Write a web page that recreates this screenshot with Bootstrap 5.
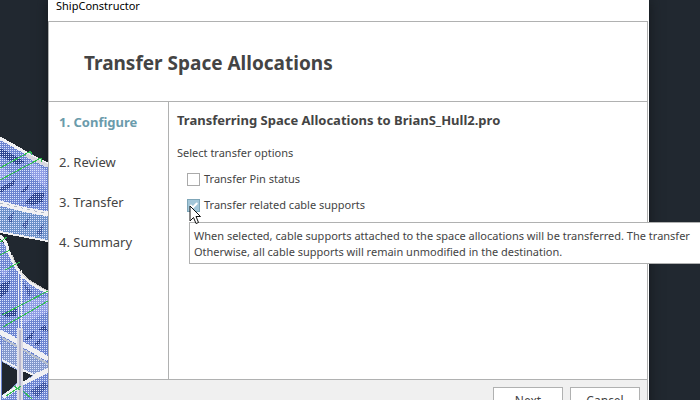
<!DOCTYPE html>
<html lang="en">
<head>
<meta charset="utf-8">
<meta name="viewport" content="width=device-width, initial-scale=1">
<title>ShipConstructor</title>
<link rel="stylesheet" href="https://cdn.jsdelivr.net/npm/bootstrap@5.3.0/dist/css/bootstrap.min.css">
<style>
  :root { --line: #b0b1b1; --ink: #444; }
  body { background: #212830; color: var(--ink); font: 12px/16px "Noto Sans", "Open Sans", sans-serif; }
  .hull { left: 0; bottom: 0; width: 48px; height: 270px; }
  .wizard { margin: 0 51px 0 48px; height: calc(100vh + 23px); box-shadow: 0 0 12px #14181c; }
  .title-strip { height: 21px; padding: 0 8px; color: #000; font-size: 11px; line-height: 12px; }
  .frame { border: 1px solid var(--line); margin-right: 1px; }
  .heading { padding: 28px 35px 24px; border-bottom: 1px solid var(--line); }
  .heading h1 { font-size: 19px; line-height: 27px; font-weight: 700; }
  .steps { width: 120px; padding: 10px; gap: 20px; border-right: 1px solid var(--line); font-size: 13px; line-height: 20px; }
  .steps a { color: var(--ink); }
  .steps a.current { color: #6b9bab; font-weight: 700; }
  .options { padding: 8px; }
  .options h2 { font-size: 13px; line-height: 20px; font-weight: 700; margin-bottom: 15px; }
  .options p { font-size: 11px; margin-bottom: 10px; }
  .option { padding-left: 10px; gap: 4px; margin-bottom: 10px; font-size: 11px; }
  .option .form-check-input { width: 13px; height: 13px; border: 1px solid #aaa; border-radius: 0; box-shadow: none; }
  .option .form-check-input:checked { background-color: #a3c6d8; border-color: #7fa6b8; background-size: 13px; }
  .hint { left: 189px; right: -2px; top: 222px; padding: 5px 4px 3px; border: 1px solid var(--line); font-size: 11px; }
  .pointer { left: 189px; top: 205px; width: 13px; height: 20px; }
  .actions { padding: 7px; gap: 7px; background: #f0f0f0; border-top: 1px solid var(--line); }
  .actions .btn { width: 70px; padding: 4px; border: 1px solid var(--line); border-radius: 0; background: #fff; color: var(--ink); font-size: 12px; line-height: 18px; }
</style>
</head>
<body class="vh-100 overflow-hidden position-relative">
<svg class="hull position-absolute" viewBox="0 130 48 270" aria-hidden="true" shape-rendering="crispEdges">
  <defs>
    <pattern id="mesh" width="2" height="2" patternUnits="userSpaceOnUse">
      <rect width="1" height="1" fill="#dde6ff"/>
    </pattern>
  </defs>
  <g fill="#6c84d0">
    <path d="M0 137 30 153 48 163V241L0 232z"/>
    <path d="M0 240C10 246 12 267 23 277Q32 288 48 292V400H0z"/>
  </g>
  <path d="M0 207 48 216V240L0 231z" fill="#6c90c8"/>
  <g fill="#2d4490">
    <path d="M0 148 12 154 25 162 18 165 0 156zM24 203 35 193 44 193 43 202 33 205zM0 188 16 179 14 185 0 193zM19 193 29 184 27 191zM0 284 10 281 8 292 0 298zM2 313 17 308 16 316 5 317zM38 330 45 325 48 331zM24 340 34 331 32 339zM34 344 42 337 39 346z"/>
    <path d="M7 218 14 212 11 224zM22 225 30 216 26 230zM36 233 44 223 41 236zM23 283 32 291 29 297zM30 391 44 382 48 386 37 397z" opacity=".7"/>
  </g>
  <g fill="#98a4e8"><path d="M28 160 46 170V188L31 176zM0 166 12 174 0 180zM24 301 48 297V312L23 324zM0 270 10 267 4 278z" opacity=".8"/></g>
  <path d="M0 137 48 163V241L0 232zM0 240C10 246 12 267 23 277Q32 288 48 292V400H0z" fill="url(#mesh)"/>
  <path d="M2 340 17 349 48 364V372L23 385 8 396H2z" fill="#8398cc"/>
  <path d="M2 340 48 364V372L8 396H2z" fill="url(#mesh)"/>
  <path d="M2 362 17 370V383L8 391 2 395zM23 370 33 375 23 382z" fill="#20262e"/>
  <g fill="none" stroke="#f1f1f3">
    <path d="M0 138 30 155 48 164" stroke-width="3"/><path d="M26 155 48 166" stroke="#d8d8de" stroke-width="4"/>
    <path d="M0 203 22 209 48 214" stroke-width="5"/><path d="M0 203 48 214" stroke="#aeb8c8" stroke-dasharray="3 4"/>
    <path d="M0 232 48 241" stroke-width="2"/>
    <path d="M0 236Q7 242 8 250M8 250Q15 268 24 277T48 292" stroke-width="3"/>
    <path d="M12 255Q18 273 29 280T48 291" stroke="#cfcdcb"/>
    <path d="M0 332 24 345 48 359" stroke-width="5"/><path d="M2 338 48 364" stroke="#b6bfcc" stroke-width="2"/>
    <path d="M2 360 20 369 34 375 48 369" stroke-width="2"/>
    <path d="M3 397 22 384 48 371" stroke-width="4"/>
    <path d="M18.500 268V330M21.500 270V330M.5 345V400"/>
  </g>
  <path d="M17 328H23V400H17z" fill="#dedee5"/><path d="M19 330H21V400H19z" fill="#b9b8cf"/>
  <g fill="none" stroke="#2fc04c">
    <path d="M0 168 31 151M28 152H31V155M0 180 41 158M38 158H41V162M0 242 7 237M0 255 10 250M5 270 20 262M2 315 48 291M3 327 48 301M6 396 21 386M14 386 20 390M23 391 32 399"/>
  </g>
</svg>

<main class="wizard bg-white d-flex flex-column">
  <header class="title-strip">ShipConstructor</header>
  <div class="frame flex-grow-1 d-flex flex-column">
    <div class="heading"><h1 class="m-0">Transfer Space Allocations</h1></div>
    <div class="d-flex flex-grow-1">
      <nav class="steps d-flex flex-column flex-shrink-0" aria-label="Steps">
        <a class="current text-decoration-none" href="#configure" aria-current="step">1. Configure</a>
        <a class="text-decoration-none" href="#review">2. Review</a>
        <a class="text-decoration-none" href="#transfer">3. Transfer</a>
        <a class="text-decoration-none" href="#summary">4. Summary</a>
      </nav>
      <section class="options flex-grow-1" id="configure">
        <h2>Transferring Space Allocations to BrianS_Hull2.pro</h2>
        <p>Select transfer options</p>
        <div class="option d-flex align-items-center">
          <input class="form-check-input m-0" type="checkbox" id="pin">
          <label for="pin">Transfer Pin status</label>
        </div>
        <div class="option d-flex align-items-center">
          <input class="form-check-input m-0" type="checkbox" id="supports" aria-describedby="supports-hint" checked>
          <label for="supports">Transfer related cable supports</label>
        </div>
      </section>
    </div>
    <footer class="actions d-flex justify-content-end">
      <button class="btn" type="button">Next</button>
      <button class="btn" type="button">Cancel</button>
    </footer>
  </div>
</main>

<div class="hint position-absolute bg-white text-nowrap" role="tooltip" id="supports-hint">When selected, cable supports attached to the space allocations will be transferred. The transfer<br>Otherwise, all cable supports will remain unmodified in the destination.</div>
<svg class="pointer position-absolute" viewBox="0 0 13 20" aria-hidden="true">
  <path d="M1 1V16L4.500 12.500 7 18.500 9.500 17.500 7 11.500H11.500z" fill="#fff" stroke="#111"/>
</svg>
<script src="https://cdn.jsdelivr.net/npm/bootstrap@5.3.0/dist/js/bootstrap.bundle.min.js"></script>
</body>
</html>
